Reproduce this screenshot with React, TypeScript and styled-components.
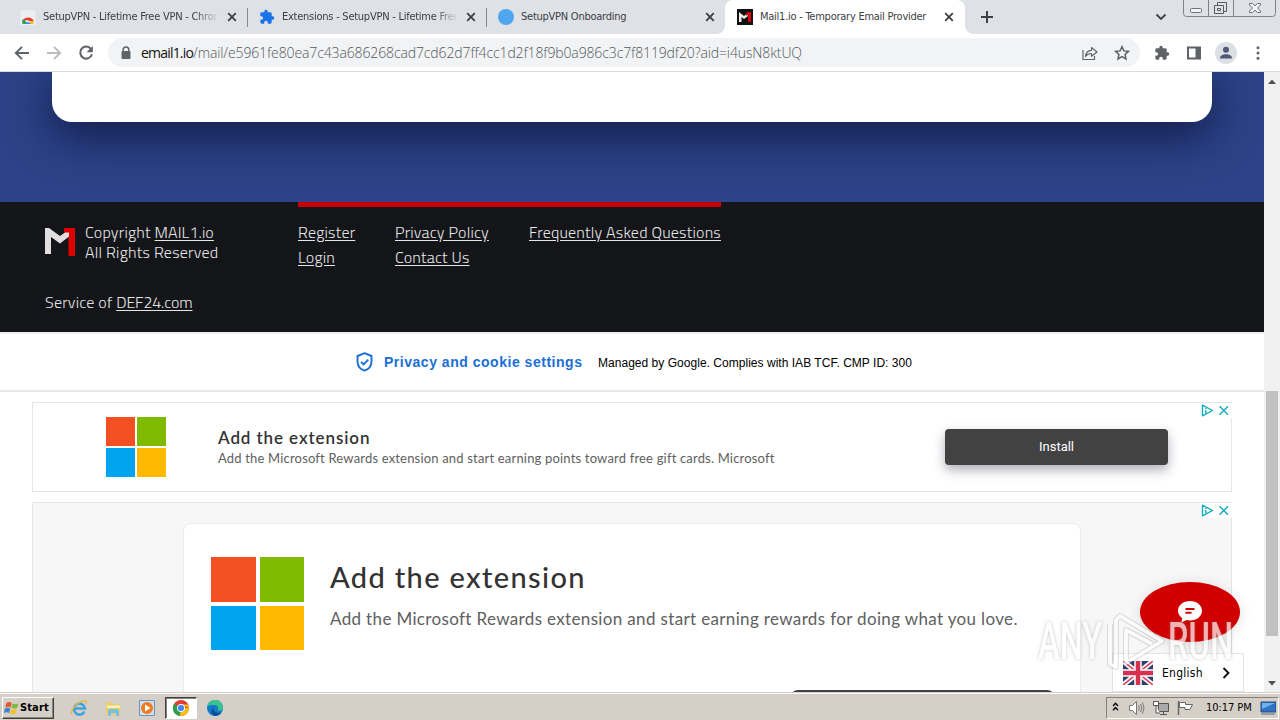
import React from "react";
import styled, { createGlobalStyle, css } from "styled-components";

const GlobalStyle = createGlobalStyle`
  * {
    box-sizing: border-box;
  }

  body {
    margin: 0;
    overflow: hidden;
    background: #fff;
    font-family: "Noto Sans", "Open Sans", sans-serif;
  }
`;

const Screen = styled.div`
  display: flex;
  flex-direction: column;
  width: 1280px;
  height: 720px;
  overflow: hidden;
`;

/* ---------- tab strip ---------- */

const TabStrip = styled.div`
  display: flex;
  height: 34px;
  padding-left: 8px;
  background: #dee1e6;
`;

const Tab = styled.div<{ $active?: boolean; $divider?: boolean }>`
  position: relative;
  display: flex;
  align-items: center;
  width: 239px;
  height: 34px;
  padding: 0 10px 0 12px;
  color: #3c4043;

  ${(p) =>
    p.$divider &&
    css`
      &::after {
        content: "";
        position: absolute;
        right: -1px;
        top: 8px;
        width: 1px;
        height: 19px;
        background: #868a90;
      }
    `}

  ${(p) =>
    p.$active &&
    css`
      width: 240px;
      background: #fff;
      border-radius: 8px 8px 0 0;

      &::before,
      &::after {
        content: "";
        position: absolute;
        bottom: 0;
        width: 8px;
        height: 8px;
      }
      &::before {
        left: -8px;
        background: radial-gradient(circle at 0 0, #dee1e6 7.5px, #fff 8px);
      }
      &::after {
        right: -8px;
        background: radial-gradient(circle at 100% 0, #dee1e6 7.5px, #fff 8px);
      }
    `}
`;

const TabTitle = styled.span<{ $fade?: boolean }>`
  width: 174px;
  margin-left: 7px;
  overflow: hidden;
  white-space: nowrap;
  font: 11px/16px "DejaVu Sans Condensed", "Noto Sans", sans-serif;
  letter-spacing: -0.25px;
  ${(p) =>
    p.$fade &&
    css`
      mask-image: linear-gradient(90deg, #000 152px, transparent 176px);
    `}
`;

const TabClose = styled.svg`
  width: 10px;
  height: 10px;
  margin-left: 10px;
`;

const StripTools = styled.div`
  display: flex;
  flex: 1;
  align-items: flex-start;
  justify-content: space-between;
  padding-left: 15px;
`;

const StripEnd = styled.div`
  display: flex;
  gap: 16px;
`;

const ChevronIcon = styled.svg`
  width: 12px;
  height: 10px;
  margin-top: 12px;
`;

const PlusIcon = styled.svg`
  width: 14px;
  height: 14px;
  margin-top: 10px;
`;

const WindowButtons = styled.svg`
  width: 97px;
  height: 18px;
`;

/* ---------- toolbar ---------- */

const Toolbar = styled.div`
  display: flex;
  align-items: center;
  height: 38px;
  padding-left: 14px;
  background: #fff;
  border-bottom: 1px solid #d9dbde;
`;

const NavIcon = styled.svg`
  width: 16px;
  height: 16px;
  margin-right: 16px;
`;

const Omnibox = styled.div`
  display: flex;
  align-items: center;
  width: 1032px;
  height: 29px;
  margin-left: -2px;
  padding: 0 10px 0 12px;
  border-radius: 15px;
  background: #f1f3f4;
`;

const Url = styled.span`
  flex: 1;
  margin-left: 9px;
  white-space: nowrap;
  font: 300 14px/18px "Open Sans", "Noto Sans", sans-serif;
  letter-spacing: -0.12px;
  color: #54585d;
`;

const Host = styled.span`
  display: inline-block;
  width: 52px;
  color: #111;
  font-weight: 400;
  letter-spacing: -0.8px;
`;

const ToolIcon = styled.svg<{ $gap?: number }>`
  width: 16px;
  height: 16px;
  margin-left: ${(p) => p.$gap ?? 16}px;
  flex: none;
`;

const Avatar = styled.svg`
  width: 22px;
  height: 22px;
  margin-left: 13px;
`;

/* ---------- page ---------- */

const Viewport = styled.div`
  display: flex;
  height: 620px;
`;

const Page = styled.main`
  position: relative;
  width: 1264px;
  overflow: hidden;
  background: #fff;
`;

const Hero = styled.section`
  height: 130px;
  padding: 0 52px;
  overflow: hidden;
  background: #2c4389;
`;

const HeroCard = styled.div`
  height: 50px;
  border-radius: 0 0 20px 20px;
  background: #fff;
  box-shadow: 0 12px 48px rgba(6, 10, 40, 0.75);
`;

const Footer = styled.footer`
  display: flex;
  align-items: flex-start;
  height: 130px;
  padding-left: 45px;
  background: #141519;
  color: #e6e6e6;
  font: 300 16px/20px "Titillium Web", "Open Sans", sans-serif;
`;

const FooterAbout = styled.div`
  width: 253px;
  padding-top: 20px;
`;

const Brand = styled.div`
  display: flex;
  height: 70px;
  gap: 10px;
`;

const BrandMark = styled.svg`
  width: 30px;
  height: 28px;
  margin-top: 6px;
`;

const Line = styled.div`
  white-space: nowrap;
  letter-spacing: 0.23px;
`;

const FooterLink = styled.a<{ $spacing?: number }>`
  color: inherit;
  text-decoration: underline;
  text-underline-offset: 2px;
  white-space: nowrap;
  letter-spacing: ${(p) => p.$spacing ?? 0.2}px;
`;

const FooterNav = styled.nav`
  display: grid;
  grid-template-columns: 57px 94px 192px;
  grid-auto-rows: 25px;
  column-gap: 40px;
  padding-top: 15px;
  border-top: 5px solid #c90000;
  line-height: 20px;
`;

const Consent = styled.section`
  display: flex;
  align-items: center;
  height: 60px;
  padding-left: 356px;
  border-top: 2px solid #f0f0f0;
  border-bottom: 2px solid #e8e8e8;
  background: #fff;
`;

const ShieldIcon = styled.svg`
  width: 17px;
  height: 20px;
`;

const ConsentTitle = styled.strong`
  width: 198px;
  margin-left: 11px;
  white-space: nowrap;
  font: 700 14px/20px "Liberation Sans", Arial, sans-serif;
  letter-spacing: 0.52px;
  color: #1a6fd6;
`;

const ConsentNote = styled.span`
  margin-left: 16px;
  padding-top: 1px;
  white-space: nowrap;
  font: 12px/20px "Liberation Sans", Arial, sans-serif;
  letter-spacing: 0.03px;
  color: #000;
`;

const Ads = styled.section`
  display: flex;
  flex-direction: column;
  gap: 10px;
  padding: 10px 32px 0;
`;

const AdFrame = styled.div<{ $tall?: boolean }>`
  position: relative;
  height: ${(p) => (p.$tall ? 260 : 90)}px;
  border: 1px solid #e6e6e6;
  background: ${(p) => (p.$tall ? "#f7f7f7" : "#fff")};
`;

const AdBadge = styled.svg`
  position: absolute;
  top: 0;
  right: -1px;
  width: 32px;
  height: 15px;
  background: #fff;
`;

const Banner = styled.div`
  display: flex;
  align-items: center;
  height: 88px;
  padding-left: 73px;
`;

const BannerCopy = styled.div`
  width: 727px;
  margin-left: 52px;
`;

const Logo = styled.div<{ $size: number; $gap: number }>`
  display: grid;
  grid-template-columns: 1fr 1fr;
  gap: ${(p) => p.$gap}px;
  width: ${(p) => p.$size}px;
  height: ${(p) => p.$size}px;
  flex: none;
`;

const Pane = styled.span<{ $color: string }>`
  background: ${(p) => p.$color};
`;

const AdTitle = styled.h3<{ $large?: boolean }>`
  margin: 0;
  font-family: "Lato", "Open Sans", sans-serif;
  font-weight: ${(p) => (p.$large ? 500 : 600)};
  font-size: ${(p) => (p.$large ? 29 : 17)}px;
  line-height: ${(p) => (p.$large ? 36 : 22)}px;
  letter-spacing: ${(p) => (p.$large ? 1.35 : 0.9)}px;
  color: #333;
  white-space: nowrap;
`;

const AdText = styled.p<{ $large?: boolean }>`
  margin: ${(p) => (p.$large ? "12px 0 0" : 0)};
  font-family: "Lato", "Open Sans", sans-serif;
  font-size: ${(p) => (p.$large ? 17 : 13)}px;
  line-height: ${(p) => (p.$large ? 24 : 18)}px;
  letter-spacing: ${(p) => (p.$large ? 0.35 : 0.18)}px;
  color: #606060;
  white-space: nowrap;
`;

const InstallButton = styled.button`
  width: 223px;
  height: 36px;
  padding: 0;
  border: 0;
  border-radius: 4px;
  background: #424242;
  box-shadow: 0 5px 12px rgba(60, 55, 80, 0.4);
  color: #fff;
  font: 13px/36px Roboto, sans-serif;
`;

const AdCard = styled.div`
  width: 898px;
  height: 238px;
  margin: 20px 0 0 150px;
  padding: 33px 25px 0 27px;
  border: 1px solid #ebebeb;
  border-radius: 8px;
  background: #fff;
`;

const AdCardTop = styled.div`
  display: flex;
  gap: 26px;
  height: 133px;
`;

const AdCardCopy = styled.div`
  padding-top: 2px;
`;

const AdCardButton = styled.div`
  width: 265px;
  height: 48px;
  margin-left: auto;
  border-radius: 8px;
  background: #424242;
`;

const Chat = styled.button`
  position: absolute;
  left: 1140px;
  top: 510px;
  display: flex;
  align-items: center;
  justify-content: center;
  width: 100px;
  height: 60px;
  padding: 0;
  border: 0;
  border-radius: 50%;
  background: #d00000;
  box-shadow: 0 2px 14px rgba(0, 0, 0, 0.12);
`;

const ChatIcon = styled.svg`
  width: 26px;
  height: 24px;
`;

const Language = styled.div`
  position: absolute;
  left: 1112px;
  top: 581px;
  display: flex;
  align-items: center;
  width: 132px;
  height: 39px;
  padding-left: 10px;
  border: 1px solid #e4e4e4;
  background: #fff;
  font: 12px/16px "DejaVu Sans Condensed", "Noto Sans", sans-serif;
  color: #000;
`;

const Flag = styled.svg`
  width: 30px;
  height: 24px;
`;

const LanguageName = styled.span`
  width: 41px;
  margin: 1px 19px 0 9px;
  white-space: nowrap;
  letter-spacing: 0.26px;
`;

const Arrow = styled.svg`
  width: 8px;
  height: 12px;
`;

const Watermark = styled.div`
  position: absolute;
  left: 1038px;
  top: 537px;
  display: flex;
  align-items: center;
  width: 200px;
  height: 64px;
  opacity: 0.7;
  pointer-events: none;
`;

const WatermarkWord = styled.span`
  width: 66px;
  white-space: nowrap;
  font: 500 51px/60px Roboto, sans-serif;
  color: #fff;
  text-shadow: 0 0 4px rgba(130, 130, 130, 0.7);
  transform: translateY(1px) scaleX(0.64);
  transform-origin: 0 50%;
`;

const WatermarkPlay = styled.svg`
  width: 64px;
  height: 62px;
  flex: none;
`;

const Scrollbar = styled.div`
  display: flex;
  flex-direction: column;
  align-items: center;
  justify-content: space-between;
  width: 16px;
  padding: 7px 0 6px;
  background: #f1f1f1;
`;

const ScrollArrow = styled.svg`
  width: 8px;
  height: 5px;
`;

const ScrollTrack = styled.div`
  flex: 1;
  width: 12px;
  padding-top: 307px;
`;

const ScrollThumb = styled.div`
  height: 245px;
  background: #c1c1c1;
`;

/* ---------- taskbar ---------- */

const Taskbar = styled.div`
  display: flex;
  align-items: center;
  height: 28px;
  padding: 2px 1px 0 2px;
  border-top: 1px solid #d4d0c8;
  background: #d6cfc7;
  box-shadow: inset 0 1px #fff;
`;

const StartButton = styled.button`
  display: flex;
  align-items: center;
  width: 52px;
  height: 22px;
  padding: 0 0 0 1px;
  border: 1px solid;
  border-color: #fff #404040 #404040 #fff;
  box-shadow: inset -1px -1px #8b877f;
  background: #d6cfc7;
  color: #000;
  font: 700 11px/16px "DejaVu Sans Condensed", "Noto Sans", sans-serif;
  letter-spacing: 0.12px;
`;

const StartFlag = styled.svg`
  width: 16px;
  height: 16px;
`;

const QuickLaunch = styled.div`
  display: flex;
  flex: 1;
  margin-left: 9px;
`;

const QuickItem = styled.div<{ $pressed?: boolean }>`
  display: flex;
  align-items: center;
  justify-content: center;
  width: 32px;
  height: 22px;
  margin-right: 2px;

  ${(p) =>
    p.$pressed &&
    css`
      border: 1px solid;
      border-color: #404040 #fff #fff #404040;
      box-shadow: inset 1px 1px #85817a;
      background: #fff;
    `}

  svg {
    width: 18px;
    height: 18px;
  }
`;

const Tray = styled.div`
  display: flex;
  align-items: center;
  width: 173px;
  height: 22px;
  padding-left: 5px;
  border: 1px solid;
  border-color: #85817a #fff #fff #85817a;
`;

const TrayIcon = styled.svg<{ $w: number; $gap: number }>`
  width: ${(p) => p.$w}px;
  height: 18px;
  margin-right: ${(p) => p.$gap}px;
  flex: none;
`;

const Clock = styled.span`
  width: 46px;
  margin-right: 8px;
  white-space: nowrap;
  font: 11px/16px "DejaVu Sans Condensed", "Noto Sans", sans-serif;
  letter-spacing: -0.05px;
  color: #000;
`;

const CloseGlyph = () => (
  <TabClose viewBox="0 0 10 10">
    <path d="M1.2 1.2l7.6 7.6M8.8 1.2L1.2 8.8" stroke="#3c4043" strokeWidth="1.8" />
  </TabClose>
);

const PUZZLE =
  "M20.5 11H19V7a2 2 0 0 0-2-2h-4V3.500a2.500 2.500 0 0 0-5 0V5H4a2 2 0 0 0-2 2v3.800h1.500a2.700 2.700 0 0 1 0 5.400H2V20a2 2 0 0 0 2 2h3.800v-1.500a2.700 2.700 0 0 1 5.400 0V22H17a2 2 0 0 0 2-2v-4h1.500a2.500 2.500 0 0 0 0-5z";

const StoreIcon = () => (
  <svg width="16" height="16" viewBox="0 0 16 16">
    <path d="M1 1h14l1 13a2 2 0 0 1-2 2H2a2 2 0 0 1-2-2z" fill="#eceef0" />
    <path d="M2.500 12a6 5.500 0 0 1 11.200 0H9L7 11z" fill="#e33b2e" />
    <path d="M2.600 10.500A6 6 0 0 0 2.500 15H7l-2-4z" fill="#2fa14f" />
    <path d="M13.700 12a6 6 0 0 1-.5 3H9l1.500-3z" fill="#fbc116" />
    <path d="M5.500 15a2.600 2.600 0 0 1 5 0z" fill="#4285f4" />
  </svg>
);

const MailMark = ({ size }: { size: number }) => (
  <svg width={size} height={size} viewBox="0 0 16 16">
    <path d="M0 0h16v16H0z" fill="#111" />
    <path d="M2 13V3l5 4 4-3v3L7 10 4.500 8v5z" fill="#eee" />
    <path d="M10 3h4v10h-3V6L9 7z" fill="#d00" />
  </svg>
);

const TabBar = () => (
  <TabStrip>
    <Tab $divider>
      <StoreIcon />
      <TabTitle $fade>SetupVPN - Lifetime Free VPN - Chrome</TabTitle>
      <CloseGlyph />
    </Tab>
    <Tab $divider>
      <svg width="16" height="16" viewBox="0 0 24 24">
        <path d={PUZZLE} fill="#1a73e8" />
      </svg>
      <TabTitle $fade>Extensions - SetupVPN - Lifetime Free</TabTitle>
      <CloseGlyph />
    </Tab>
    <Tab>
      <svg width="16" height="16" viewBox="0 0 16 16">
        <circle cx="8" cy="8" r="8" fill="#4ea6ee" />
      </svg>
      <TabTitle>SetupVPN Onboarding</TabTitle>
      <CloseGlyph />
    </Tab>
    <Tab $active>
      <MailMark size={16} />
      <TabTitle>Mail1.io - Temporary Email Provider</TabTitle>
      <CloseGlyph />
    </Tab>
    <StripTools>
      <PlusIcon viewBox="0 0 14 14">
        <path d="M7 1v12M1 7h12" stroke="#3c4043" strokeWidth="2" />
      </PlusIcon>
      <StripEnd>
        <ChevronIcon viewBox="0 0 12 10">
          <path d="M1.500 2.500L6 7l4.500-4.500" fill="none" stroke="#3c4043" strokeWidth="1.800" />
        </ChevronIcon>
        <WindowButtons viewBox="0 0 97 18" fill="none" stroke="#7d828c">
          <path d="M.5 0v13.500a3 3 0 0 0 3 3h86a3 3 0 0 0 3-3V0M25.500 0v16M50.500 0v16" />
          <rect x="7.500" y="8.500" width="11" height="4" rx="1" fill="#f4f5f7" stroke="#6d727b" />
          <path d="M34.500 5V2.500h9v9H41M31.500 5.500h9v8h-9zM34.500 8.500h3v2h-3z" stroke="#555a64" />
          <path
            d="M66.500 3.500h3l2.500 2.300 2.500-2.300h3v1.500l-3 3 3 3v1.500h-3L72 10.200l-2.500 2.300h-3V11l3-3-3-3z"
            fill="#f4f5f7"
            stroke="#6d727b"
          />
        </WindowButtons>
      </StripEnd>
    </StripTools>
  </TabStrip>
);

const AddressBar = () => (
  <Toolbar>
    <NavIcon viewBox="0 0 16 16">
      <path d="M15 8H2M8 1.800L1.800 8 8 14.200" fill="none" stroke="#5f6368" strokeWidth="1.900" />
    </NavIcon>
    <NavIcon viewBox="0 0 16 16">
      <path d="M1 8h13M8 1.800L14.200 8 8 14.200" fill="none" stroke="#babcbe" strokeWidth="1.900" />
    </NavIcon>
    <NavIcon viewBox="0 0 16 16">
      <path d="M13.200 4.200A6 6 0 1 0 14 9.300" fill="none" stroke="#5f6368" strokeWidth="2" />
      <path d="M14.800 1v6.200H8.600z" fill="#5f6368" />
    </NavIcon>
    <Omnibox>
      <svg width="12" height="14" viewBox="0 0 12 14">
        <path d="M3.200 6V3.800a2.800 2.800 0 0 1 5.600 0V6" fill="none" stroke="#5f6368" strokeWidth="1.500" />
        <rect x="1.500" y="5" width="9" height="8" rx="1" fill="#5f6368" />
      </svg>
      <Url>
        <Host>email1.io</Host>
        /mail/e5961fe80ea7c43a686268cad7cd62d7ff4cc1d2f18f9b0a986c3c7f8119df20?aid=i4usN8ktUQ
      </Url>
      <ToolIcon viewBox="0 0 16 16" fill="none" stroke="#5f6368" strokeWidth="1.200">
        <path d="M1 5v9.500h11.500V11" />
        <path d="M3.500 11.500c.3-4 2.300-6 6-6.200V2.500L15 7l-5.500 4.300V8.500c-2.600 0-4.500.8-6 3z" strokeLinejoin="round" />
      </ToolIcon>
      <ToolIcon viewBox="0 0 16 16">
        <path
          d="M8 1.700l1.900 4.200 4.500.5-3.300 3.100.9 4.500L8 11.700 4 14l.9-4.500L1.600 6.400l4.500-.5z"
          fill="none"
          stroke="#5f6368"
          strokeWidth="1.500"
        />
      </ToolIcon>
    </Omnibox>
    <ToolIcon viewBox="0 0 24 24" $gap={14}>
      <path d={PUZZLE} fill="#5f6368" />
    </ToolIcon>
    <ToolIcon viewBox="0 0 16 16">
      <path d="M1 1.500h14v13H1zM3 3.500v9h6.500v-9z" fill="#5f6368" fillRule="evenodd" />
    </ToolIcon>
    <Avatar viewBox="0 0 22 22">
      <circle cx="11" cy="11" r="11" fill="#dcdfe3" />
      <circle cx="11" cy="7.800" r="3" fill="#4d5a78" />
      <path d="M5 16.500c0-3 3-4.300 6-4.300s6 1.300 6 4.300z" fill="#4d5a78" />
    </Avatar>
    <ToolIcon viewBox="0 0 16 16" fill="#5f6368" $gap={13}>
      <circle cx="8" cy="2.800" r="1.500" />
      <circle cx="8" cy="8" r="1.500" />
      <circle cx="8" cy="13.200" r="1.500" />
    </ToolIcon>
  </Toolbar>
);

const MicrosoftLogo = ({ size, gap }: { size: number; gap: number }) => (
  <Logo $size={size} $gap={gap}>
    <Pane $color="#f25022" />
    <Pane $color="#7fba00" />
    <Pane $color="#01a4ef" />
    <Pane $color="#ffb901" />
  </Logo>
);

const AdChoices = () => (
  <AdBadge viewBox="0 0 32 15" fill="none" stroke="#12aebc" strokeWidth="1.400">
    <path d="M2.500 2.200v10.600l10-5.300z" strokeLinejoin="round" />
    <path d="M5.800 5v1M5.800 7v3.500" />
    <path d="M19.500 3.300l8.500 8.500M28 3.300l-8.500 8.500" />
  </AdBadge>
);

const SiteFooter = () => (
  <Footer>
    <FooterAbout>
      <Brand>
        <BrandMark viewBox="0 0 30 28">
          <path d="M19 0h11v28h-6.500V8L19 4z" fill="#e00000" />
          <path d="M0 0h4l11 8 5-3.500h4v4L15 15.500 6 9v17H0z" fill="#e2dede" />
        </BrandMark>
        <div>
          <Line>
            Copyright <FooterLink $spacing={0.12}>MAIL1.io</FooterLink>
          </Line>
          <Line>All Rights Reserved</Line>
        </div>
      </Brand>
      <Line>
        Service of <FooterLink $spacing={-0.12}>DEF24.com</FooterLink>
      </Line>
    </FooterAbout>
    <FooterNav>
      <FooterLink>Register</FooterLink>
      <FooterLink>Privacy Policy</FooterLink>
      <FooterLink>Frequently Asked Questions</FooterLink>
      <FooterLink>Login</FooterLink>
      <FooterLink>Contact Us</FooterLink>
    </FooterNav>
  </Footer>
);

const ConsentBar = () => (
  <Consent>
    <ShieldIcon viewBox="0 0 17 20" fill="none" stroke="#1a6fd6" strokeWidth="1.900">
      <path d="M8.500 1.200l7 2.800v5.500c0 4-2.800 7.600-7 9.200-4.200-1.600-7-5.200-7-9.200V4z" />
      <path d="M5 9.800l2.600 2.600 4.700-4.800" />
    </ShieldIcon>
    <ConsentTitle>Privacy and cookie settings</ConsentTitle>
    <ConsentNote>Managed by Google. Complies with IAB TCF. CMP ID: 300</ConsentNote>
  </Consent>
);

const AdSection = () => (
  <Ads>
    <AdFrame>
      <Banner>
        <MicrosoftLogo size={60} gap={2} />
        <BannerCopy>
          <AdTitle>Add the extension</AdTitle>
          <AdText>
            Add the Microsoft Rewards extension and start earning points toward free gift cards. Microsoft
          </AdText>
        </BannerCopy>
        <InstallButton>Install</InstallButton>
      </Banner>
      <AdChoices />
    </AdFrame>
    <AdFrame $tall>
      <AdCard>
        <AdCardTop>
          <MicrosoftLogo size={93} gap={4} />
          <AdCardCopy>
            <AdTitle $large>Add the extension</AdTitle>
            <AdText $large>
              Add the Microsoft Rewards extension and start earning rewards for doing what you love.
            </AdText>
          </AdCardCopy>
        </AdCardTop>
        <AdCardButton />
      </AdCard>
      <AdChoices />
    </AdFrame>
  </Ads>
);

const FloatingWidgets = () => (
  <>
    <Chat>
      <ChatIcon viewBox="0 0 26 24">
        <path
          d="M13 1c6.600 0 12 4 12 9.700s-5.400 9.700-12 9.700c-1.200 0-2.300-.1-3.400-.4L4.500 22.500l.6-4.600C2.500 16.200 1 13.700 1 10.700 1 5 6.400 1 13 1z"
          fill="#fff"
        />
        <path d="M8.500 9h9M8.500 12.800h6" stroke="#d00000" strokeWidth="1.900" />
      </ChatIcon>
    </Chat>
    <Language>
      <Flag viewBox="0 0 30 24">
        <path d="M0 0h30v24H0z" fill="#2e3e6e" />
        <path d="M0 0l30 24M30 0L0 24" stroke="#fff" strokeWidth="5" />
        <path d="M0 0l30 24M30 0L0 24" stroke="#d8405a" strokeWidth="1.600" />
        <path d="M15 0v24M0 12h30" stroke="#fff" strokeWidth="7.500" />
        <path d="M15 0v24M0 12h30" stroke="#d8304f" strokeWidth="4.500" />
      </Flag>
      <LanguageName>English</LanguageName>
      <Arrow viewBox="0 0 8 12">
        <path d="M1.500 1l5 5-5 5" fill="none" stroke="#111" strokeWidth="1.900" />
      </Arrow>
    </Language>
    <Watermark>
      <WatermarkWord>ANY</WatermarkWord>
      <WatermarkPlay viewBox="0 0 64 62" fill="none" strokeLinejoin="round">
        <path d="M6 14v40l6 3V10l4-4 42 25-36 22V20l26 14" stroke="rgba(120,120,120,.3)" strokeWidth="6" />
        <path d="M6 14v40l6 3V10l4-4 42 25-36 22V20l26 14" stroke="#fff" strokeWidth="3.500" />
      </WatermarkPlay>
      <WatermarkWord>RUN</WatermarkWord>
    </Watermark>
  </>
);

const SystemTaskbar = () => (
  <Taskbar>
    <StartButton>
      <StartFlag viewBox="0 0 16 16">
        <path d="M2.500 3C4.500 1.500 6 2 7.700 3L6.500 7.500C5 6.500 3.500 6.500 1.200 7.600z" fill="#e4572c" />
        <path d="M8.500 3.400c2 1 3.700 1 6-.2l-1.300 4.500c-2 1.200-4 1-5.800 0z" fill="#7cb93c" />
        <path d="M1 8.500c2-1.200 3.700-1 5.300 0L5 13C3.500 12 1.500 12-.2 13z" fill="#3b82cf" />
        <path d="M7.100 8.900c2 1 3.600 1 5.900-.1L11.700 13.300c-2 1.200-4 1-5.900 0z" fill="#f4c030" />
      </StartFlag>
      <span>Start</span>
    </StartButton>
    <QuickLaunch>
      <QuickItem>
        <svg viewBox="0 0 18 18" fill="none">
          <path d="M14.500 12.500A5.500 5.500 0 1 1 15 9.500H5" stroke="#3fa3e0" strokeWidth="2.600" />
          <path d="M2 15.500C-.5 13 6 3 14 1.800c2.500-.2 2.500 1.800 1.800 3.200" stroke="#e8b93c" strokeWidth="1.300" />
        </svg>
      </QuickItem>
      <QuickItem>
        <svg viewBox="0 0 18 18">
          <path d="M2 3h5l1 2h8v11H2z" fill="#e9cf6c" />
          <path d="M3 6.500h13V9H3z" fill="#fbf0b8" />
          <path d="M4 17v-5a2 2 0 0 1 2-2h7a2 2 0 0 1 2 2v5h-3v-3H7v3z" fill="#79bfe0" />
        </svg>
      </QuickItem>
      <QuickItem>
        <svg viewBox="0 0 18 18">
          <path d="M1.500 1.500h15v15h-15z" fill="#cfe2f2" stroke="#6c93bd" />
          <circle cx="9" cy="9" r="6" fill="#ee7c1c" />
          <path d="M7 5.500v7L12.500 9z" fill="#fff" />
        </svg>
      </QuickItem>
      <QuickItem $pressed>
        <svg viewBox="0 0 18 18">
          <circle cx="9" cy="9" r="8" fill="#e33b2e" />
          <path d="M9 9L2 5a8 8 0 0 0 6 12z" fill="#2c9f4b" />
          <path d="M9 9h8a8 8 0 0 1-9 8z" fill="#fbc116" />
          <path d="M9 5.500h7.200A8 8 0 0 1 17 9z" fill="#fbc116" />
          <circle cx="9" cy="9" r="3.700" fill="#4285f4" stroke="#fff" strokeWidth="1" />
        </svg>
      </QuickItem>
      <QuickItem>
        <svg viewBox="0 0 18 18">
          <circle cx="9" cy="9" r="8" fill="#1279c9" />
          <path d="M1.500 7C3 2.500 6 1 9 1c5 0 8 3.500 8 7 0 3-2.500 4-5 4 1-3 0-6-4-6-3 0-5.500.5-6.500 1z" fill="#39c28e" />
          <path d="M7.500 8.500c-1 4 3 6.500 8 4.800C14 16 11 17 9 17c-4-1-5-6-1.500-8.500z" fill="#0c4f95" />
        </svg>
      </QuickItem>
    </QuickLaunch>
    <Tray>
      <TrayIcon $w={7} $gap={9} viewBox="0 0 7 18" fill="none" stroke="#000" strokeWidth="1.300">
        <path d="M1 7l2.500-2.700L6 7M1 11.200l2.500-2.700L6 11.200" />
      </TrayIcon>
      <TrayIcon $w={17} $gap={8} viewBox="0 0 17 18" fill="none" stroke="#777">
        <path d="M1.500 6.500h3l4-4v13l-4-4h-3z" fill="#fff" />
        <path d="M10.500 6.500q1.500 2.500 0 5M12.500 5q2.500 4 0 8M14.500 3.500q3 5.500 0 11" />
      </TrayIcon>
      <TrayIcon $w={16} $gap={8} viewBox="0 0 16 18" fill="none" stroke="#555">
        <path d="M5.500 4.500h10v8h-10zM7 15.500h7M10.500 13v2" fill="#aaa" />
        <path d="M.5 2.500h5v4h-5zM3 7v7h4" fill="#fff" />
      </TrayIcon>
      <TrayIcon $w={17} $gap={12} viewBox="0 0 17 18" fill="none" stroke="#666">
        <path d="M1.500 2v14" strokeWidth="1.500" />
        <path d="M2.500 3.500h6v2h7l-2.500 5H8v-2H2.500z" fill="#fff" />
      </TrayIcon>
      <Clock>10:17 PM</Clock>
      <TrayIcon $w={16} $gap={0} viewBox="0 0 16 18">
        <path d="M1 3h15v10H1z" fill="#2f72c4" stroke="#27487c" />
        <path d="M2 4h13L2 10z" fill="#70b2ee" />
        <path d="M1 15h14" stroke="#5d6b80" />
      </TrayIcon>
    </Tray>
  </Taskbar>
);

const App = () => (
  <>
    <GlobalStyle />
    <Screen>
      <TabBar />
      <AddressBar />
      <Viewport>
        <Page>
          <Hero>
            <HeroCard />
          </Hero>
          <SiteFooter />
          <ConsentBar />
          <AdSection />
          <FloatingWidgets />
        </Page>
        <Scrollbar>
          <ScrollArrow viewBox="0 0 8 5">
            <path d="M0 5l4-4.500L8 5z" fill="#505050" />
          </ScrollArrow>
          <ScrollTrack>
            <ScrollThumb />
          </ScrollTrack>
          <ScrollArrow viewBox="0 0 8 5">
            <path d="M0 0l4 4.500L8 0z" fill="#505050" />
          </ScrollArrow>
        </Scrollbar>
      </Viewport>
      <SystemTaskbar />
    </Screen>
  </>
);

export default App;
